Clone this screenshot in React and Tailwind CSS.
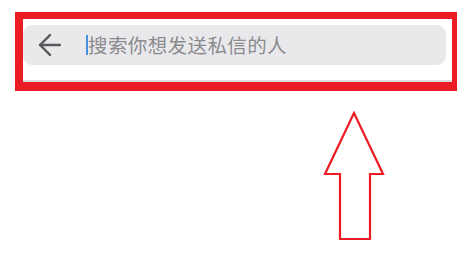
import { ArrowLeft } from "lucide-react";

export default function App() {
	return (
		<div className="w-[465px] h-[257px] bg-white overflow-hidden font-['Noto_Sans_CJK_SC','Noto_Sans',sans-serif]">
			<div className="ml-[15px] mt-[12px] w-[442px] h-[79px] border-[#ec1c24] border-l-[8px] border-t-[7px] border-r-[5px] border-b-[9px] bg-white">
				<div className="pt-[6px] pr-[6px]">
					<div className="h-[40px] rounded-[9px] bg-[#e9e9ec] flex items-center">
						<ArrowLeft className="ml-[10px] w-[34px] h-[34px] text-[#5a5a5c]" strokeWidth={1.7} />
						<span className="ml-[19px] w-[2px] h-[20px] bg-[#4a90e2]" />
						<span className="text-[19.5px] leading-none text-[#8b8b8e] tracking-[0.4px]">
							搜索你想发送私信的人
						</span>
					</div>
				</div>
				<div className="mt-[15px] h-[2px] bg-[#dcdcdc]" />
			</div>
			<svg
				className="ml-[322px] mt-[20px]"
				width="64"
				height="130"
				viewBox="0 0 64 130"
			>
				<polygon
					points="32,2 3,63 18,63 18,128 48,128 48,63 61,63"
					fill="none"
					stroke="#ec1c24"
					strokeWidth="2.2"
				/>
			</svg>
		</div>
	);
}
